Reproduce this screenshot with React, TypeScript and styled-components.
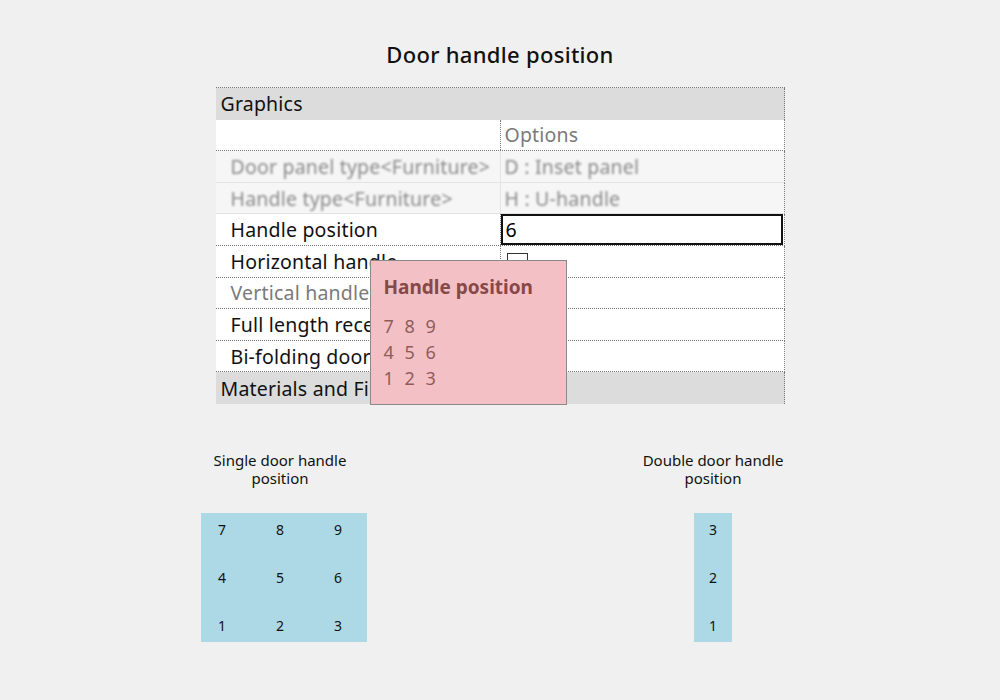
import styled, { createGlobalStyle } from "styled-components";

const GlobalStyle = createGlobalStyle`
  html, body {
    margin: 0;
    padding: 0;
    background: #f0f0f0;
  }
`;

type RowKind = "section" | "plain" | "blurred" | "muted";

interface PropertyRow {
  kind: RowKind;
  label: string;
  value?: string;
  control?: "options" | "input" | "checkbox";
}

const rows: PropertyRow[] = [
  { kind: "section", label: "Graphics" },
  { kind: "plain", label: "", value: "Options", control: "options" },
  { kind: "blurred", label: "Door panel type<Furniture>", value: "D : Inset panel" },
  { kind: "blurred", label: "Handle type<Furniture>", value: "H : U-handle" },
  { kind: "plain", label: "Handle position", value: "6", control: "input" },
  { kind: "plain", label: "Horizontal handle", control: "checkbox" },
  { kind: "muted", label: "Vertical handle" },
  { kind: "plain", label: "Full length recess" },
  { kind: "plain", label: "Bi-folding door" },
  { kind: "section", label: "Materials and Finishes" },
];

const singleGrid = [7, 8, 9, 4, 5, 6, 1, 2, 3];
const doubleGrid = [3, 2, 1];

function App() {
  return (
    <>
      <GlobalStyle />
      <Page>
        <Title>Door handle position</Title>

        <PropertyGrid>
          {rows.map((row, i) =>
            row.kind === "section" ? (
              <SectionRow key={i}>{row.label}</SectionRow>
            ) : (
              <Row key={i} $kind={row.kind}>
                <NameCell $kind={row.kind}>{row.label}</NameCell>
                <ValueCell $kind={row.kind}>
                  {row.control === "input" && <ValueInput>{row.value}</ValueInput>}
                  {row.control === "checkbox" && <Checkbox />}
                  {row.control !== "input" && row.control !== "checkbox" && (
                    <ValueText $kind={row.kind} $control={row.control}>
                      {row.value}
                    </ValueText>
                  )}
                </ValueCell>
              </Row>
            )
          )}

          <Tooltip>
            <TooltipTitle>Handle position</TooltipTitle>
            <TooltipDigits>
              <span>7 8 9</span>
              <span>4 5 6</span>
              <span>1 2 3</span>
            </TooltipDigits>
          </Tooltip>
        </PropertyGrid>

        <Diagrams>
          <Diagram $width={166}>
            <DiagramLabel $shift={8}>
              Single door handle
              <br />
              position
            </DiagramLabel>
            <NumberBox $cols={3}>
              {singleGrid.map((n) => (
                <Digit key={n}>{n}</Digit>
              ))}
            </NumberBox>
          </Diagram>
          <Diagram $width={172}>
            <DiagramLabel $shift={0}>
              Double door handle
              <br />
              position
            </DiagramLabel>
            <NumberBox $cols={1}>
              {doubleGrid.map((n) => (
                <Digit key={n}>{n}</Digit>
              ))}
            </NumberBox>
          </Diagram>
        </Diagrams>
      </Page>
    </>
  );
}

const Page = styled.div`
  width: 1000px;
  height: 700px;
  display: flex;
  flex-direction: column;
  align-items: center;
  font-family: "Noto Sans", "Open Sans", sans-serif;
  color: #111;
`;

const Title = styled.h1`
  margin: 40px 0 0;
  font-size: 22px;
  line-height: 28px;
  font-weight: 500;
  letter-spacing: 0.3px;
  color: #111;
`;

const PropertyGrid = styled.div`
  position: relative;
  margin-top: 19px;
  width: 569px;
  display: grid;
  grid-template-rows: repeat(10, 31.6px);
  border-top: 1px dotted #777;
  font-family: "Noto Sans", "Open Sans", sans-serif;
  font-size: 19.5px;
  letter-spacing: 0.2px;
`;

const SectionRow = styled.div`
  display: flex;
  align-items: center;
  padding-left: 5px;
  background: #dcdcdc;
  color: #111;
  border-right: 1px dotted #777;
  box-sizing: border-box;
  white-space: nowrap;
  overflow: hidden;
`;

const Row = styled.div<{ $kind: RowKind }>`
  display: grid;
  grid-template-columns: 284px 1fr;
  background: ${(p) => (p.$kind === "blurred" ? "#f6f6f6" : "#fff")};
  border-bottom: 1px ${(p) => (p.$kind === "blurred" ? "solid #e4e4e4" : "dotted #777")};
  border-right: 1px dotted #777;
  box-sizing: border-box;
`;

const NameCell = styled.div<{ $kind: RowKind }>`
  display: flex;
  align-items: center;
  padding-left: 15px;
  white-space: nowrap;
  overflow: hidden;
  color: ${(p) => (p.$kind === "muted" ? "#7a7a7a" : p.$kind === "blurred" ? "#8a8a8a" : "#111")};
  filter: ${(p) => (p.$kind === "blurred" ? "blur(0.8px)" : "none")};
`;

const ValueCell = styled.div<{ $kind: RowKind }>`
  display: flex;
  align-items: center;
  border-left: 1px ${(p) => (p.$kind === "blurred" ? "solid #e4e4e4" : "dotted #777")};
  box-sizing: border-box;
`;

const ValueText = styled.span<{ $kind: RowKind; $control?: string }>`
  padding-left: 4px;
  white-space: nowrap;
  color: ${(p) => (p.$control === "options" ? "#7a7a7a" : "#8a8a8a")};
  filter: ${(p) => (p.$kind === "blurred" ? "blur(0.8px)" : "none")};
`;

const ValueInput = styled.div`
  align-self: stretch;
  flex: 1;
  display: flex;
  align-items: center;
  margin: 0 1px 0 0;
  padding-left: 3px;
  border: 2px solid #111;
  background: #fff;
  color: #000;
`;

const Checkbox = styled.div`
  align-self: flex-start;
  margin: 7px 0 0 6px;
  width: 19px;
  height: 19px;
  border: 1.5px solid #333;
  background: #fff;
`;

const Tooltip = styled.div`
  position: absolute;
  left: 154px;
  top: 172px;
  width: 197px;
  height: 145px;
  box-sizing: border-box;
  padding: 14px 13px;
  background: #f3c1c5;
  border: 1px solid #8a8a8a;
  color: #8a4f4f;
  letter-spacing: 0;
  font-family: "Noto Sans", "Open Sans", sans-serif;
`;

const TooltipTitle = styled.div`
  font-size: 19px;
  font-weight: 700;
  line-height: 24px;
  color: #874848;
`;

const TooltipDigits = styled.div`
  margin-top: 14px;
  display: flex;
  flex-direction: column;
  font-size: 18px;
  line-height: 26px;
  word-spacing: 6px;
  color: #8f5c5c;
`;

const Diagrams = styled.div`
  margin-top: 47px;
  width: 598px;
  display: flex;
  justify-content: space-between;
`;

const Diagram = styled.div<{ $width: number }>`
  width: ${(p) => p.$width}px;
  display: flex;
  flex-direction: column;
  align-items: center;
`;

const DiagramLabel = styled.div<{ $shift: number }>`
  margin-right: ${(p) => p.$shift}px;
  font-size: 15px;
  line-height: 18px;
  text-align: center;
  color: #111;
  white-space: nowrap;
`;

const NumberBox = styled.div<{ $cols: number }>`
  margin-top: 26px;
  display: grid;
  grid-template-columns: repeat(${(p) => p.$cols}, auto);
  column-gap: 50px;
  row-gap: 30px;
  padding: ${(p) => (p.$cols > 1 ? "8px 25px 7px 17px" : "8px 15px 7px 15px")};
  background: #add8e6;
`;

const Digit = styled.span`
  font-size: 14px;
  line-height: 18px;
  color: #111;
`;

export default App;
